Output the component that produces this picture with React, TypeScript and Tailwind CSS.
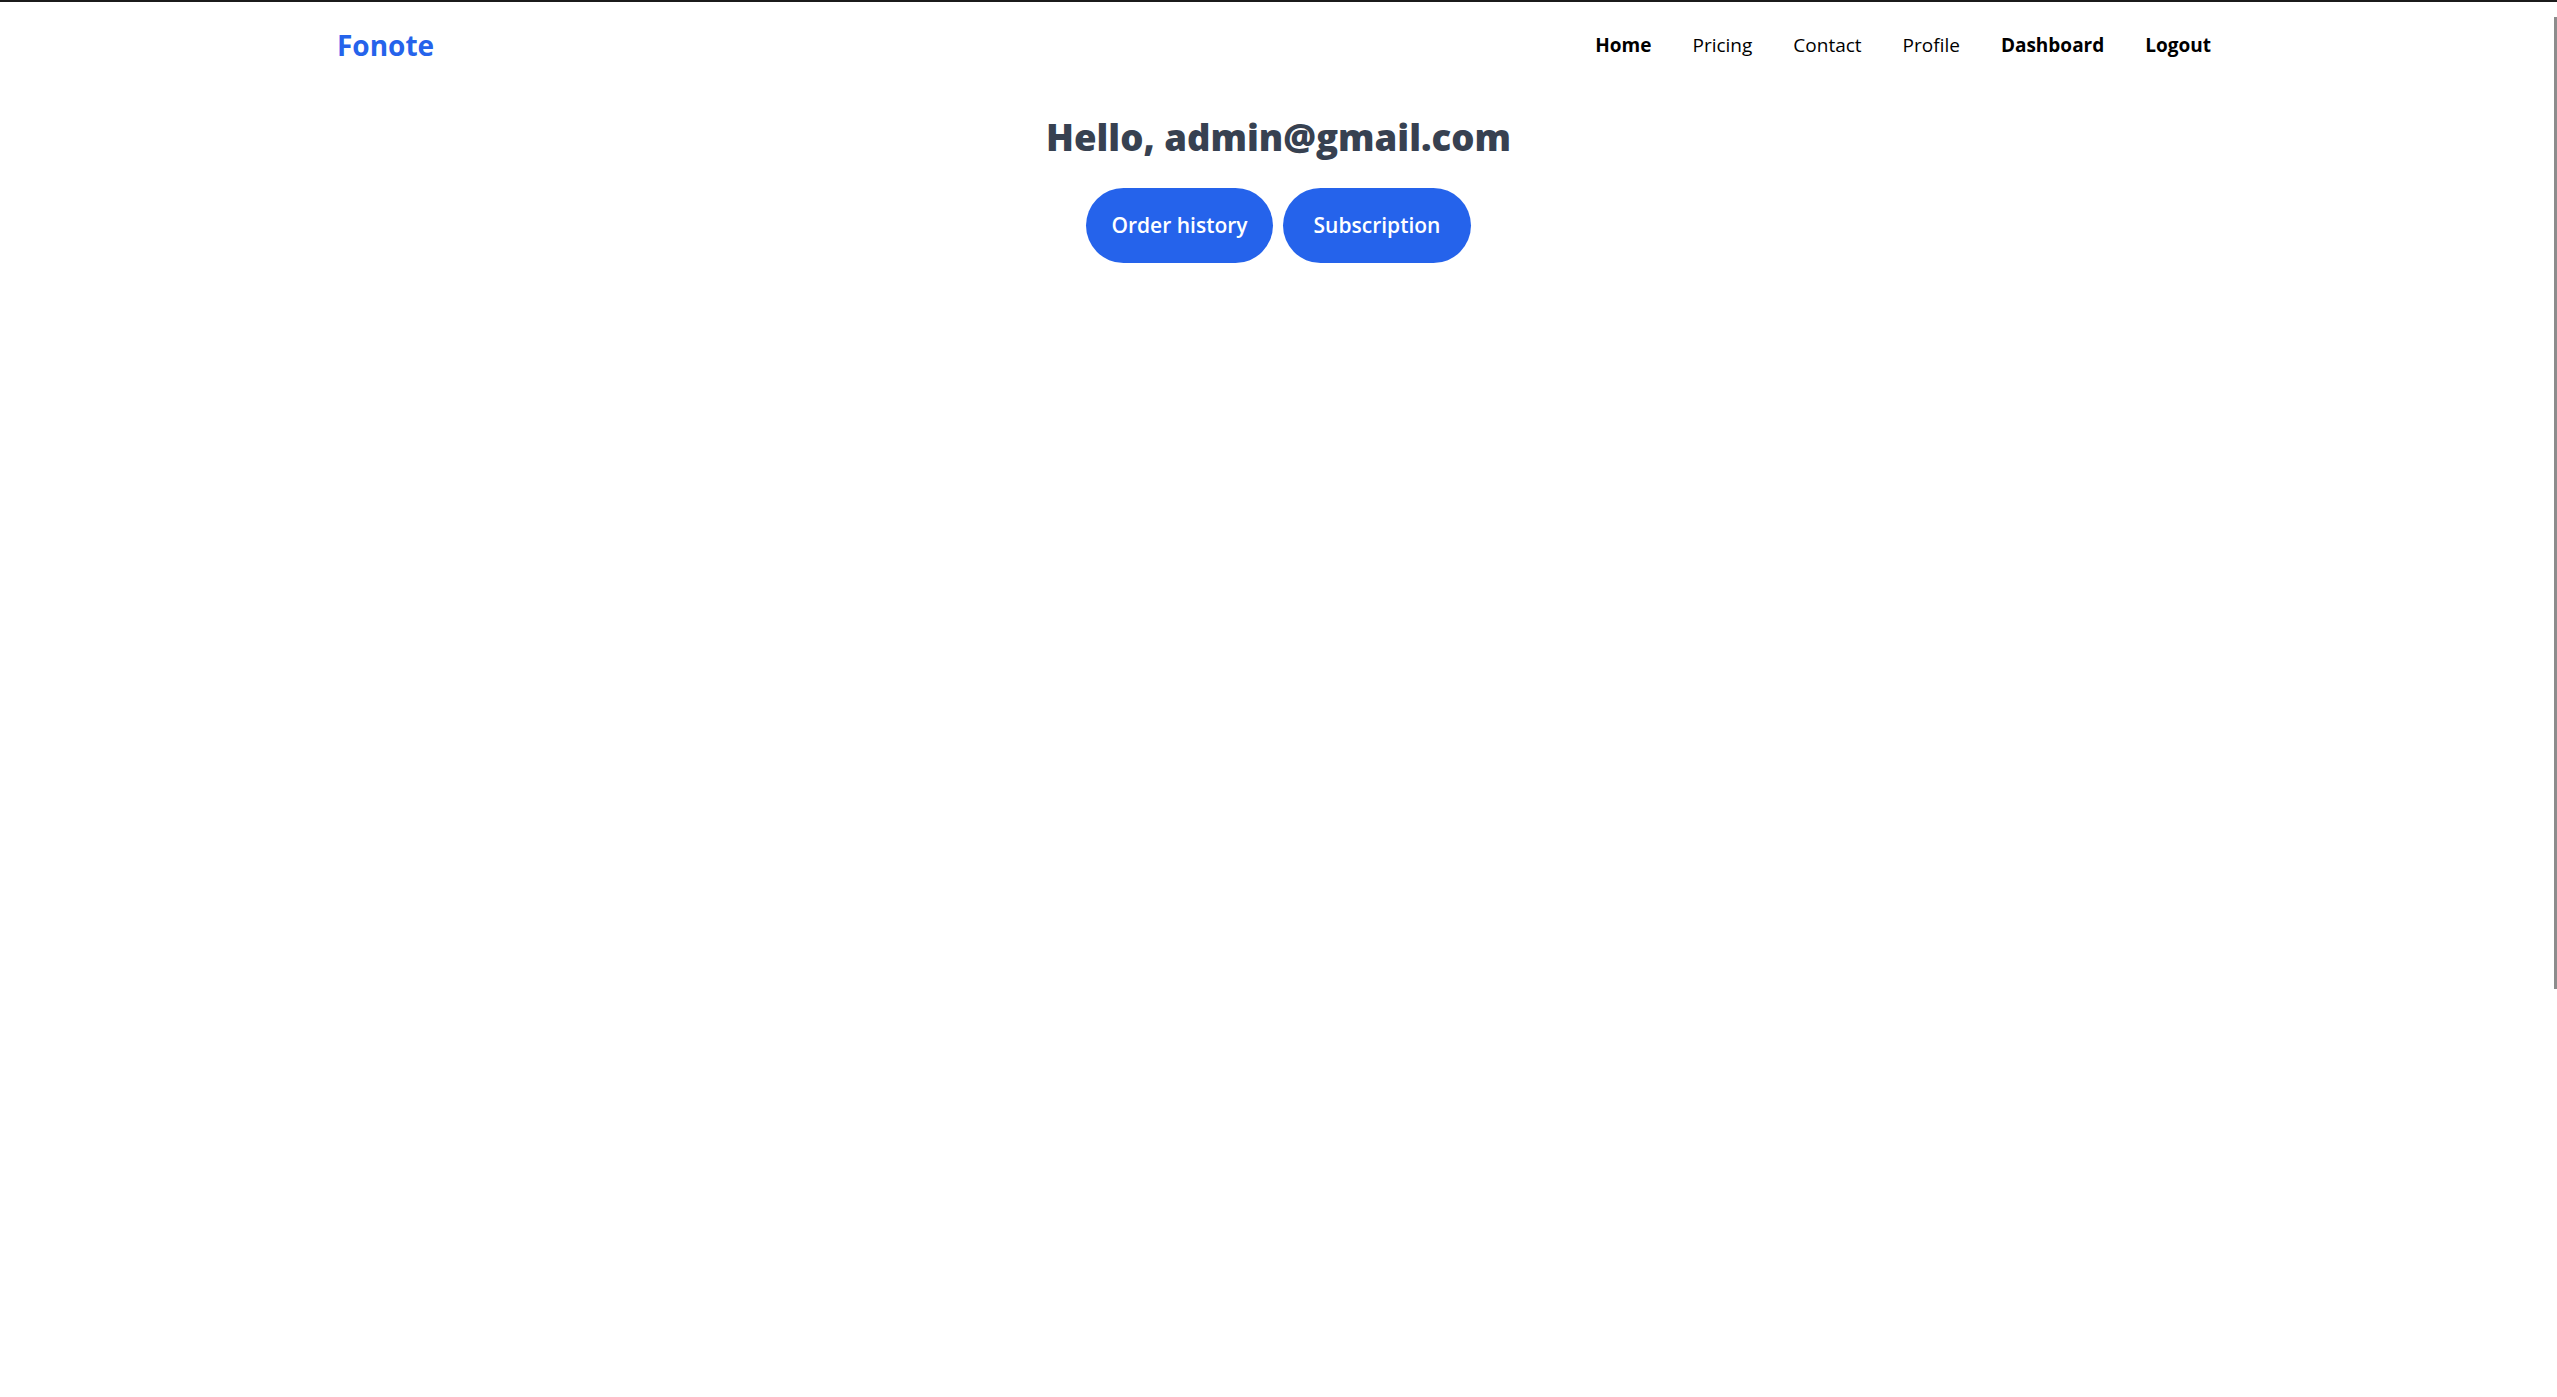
import { useState } from 'react'

const navLinks = [
  { label: 'Home', bold: true },
  { label: 'Pricing', bold: false },
  { label: 'Contact', bold: false },
  { label: 'Profile', bold: false },
  { label: 'Dashboard', bold: true },
  { label: 'Logout', bold: true },
]

export default function App() {
  const [tab, setTab] = useState('orders')

  return (
    <div className="min-h-[1397px] border-t-2 border-[#1b1b1b] bg-white font-['Open_Sans',sans-serif]">
      <header className="flex h-[86px] items-center justify-between pl-[337px] pr-[346px]">
        <a href="#" className="text-[28px] font-bold text-[#2563eb]">
          Fonote
        </a>
        <nav className="flex items-center gap-[41px]">
          {navLinks.map((link) => (
            <a
              key={link.label}
              href="#"
              className={`text-[19px] text-black ${link.bold ? 'font-bold' : 'font-normal'}`}
            >
              {link.label}
            </a>
          ))}
        </nav>
      </header>

      <main className="flex flex-col items-center pt-[25px]">
        <h1 className="text-[36.5px] font-extrabold leading-[48px] text-[#374151]">Hello, admin@gmail.com</h1>
        <div className="mt-[27px] flex gap-[10px]">
          <button
            onClick={() => setTab('orders')}
            className="h-[75px] w-[187px] rounded-full bg-[#2563eb] text-[21px] font-semibold text-white"
          >
            Order history
          </button>
          <button
            onClick={() => setTab('subscription')}
            className="h-[75px] w-[188px] rounded-full bg-[#2563eb] text-[21px] font-semibold text-white"
          >
            Subscription
          </button>
        </div>
        <div className="hidden">{tab}</div>
      </main>

      {/* overlay scrollbar thumb */}
      <div className="fixed right-0 top-[17px] h-[972px] w-[3px] bg-[#8c8c8c]" />
    </div>
  )
}
